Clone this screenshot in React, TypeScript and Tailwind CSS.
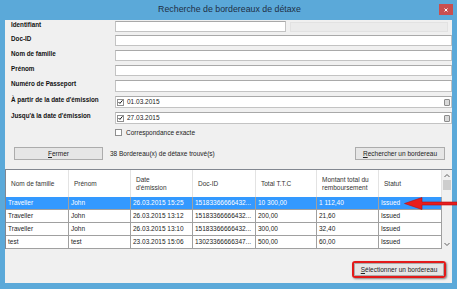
import React from 'react'

const cols = ['w-[63px]', 'w-[62px]', 'w-[62px]', 'w-[63px]', 'w-[61px]', 'w-[62px]', 'w-[63px]']

const rows = [
  ['Traveller', 'John', '26.03.2015 15:25', '15183366666432...', '10 300,00', '1 112,40', 'Issued'],
  ['Traveller', 'John', '26.03.2015 13:12', '15183366666432...', '200,00', '21,60', 'Issued'],
  ['Traveller', 'John', '26.03.2015 13:10', '15183366666432...', '300,00', '32,40', 'Issued'],
  ['test', 'test', '23.03.2015 15:06', '13023366666347...', '500,00', '60,00', 'Issued'],
]

function TextInput({ children }: { children?: React.ReactNode }) {
  return (
    <div className="flex-1 h-full bg-white border border-[#c3c3c3] border-t-[#a9a9a9] flex items-center">
      {children}
    </div>
  )
}

function Check({ checked }: { checked?: boolean }) {
  return (
    <div className="w-[7px] h-[7px] bg-white border border-[#8f8f8f] flex items-center justify-center">
      {checked && (
        <svg width="6" height="6" viewBox="0 0 6 6">
          <path d="M0.6 3 L2.3 4.7 L5.4 1" stroke="#1a1a1a" strokeWidth="1.2" fill="none" />
        </svg>
      )}
    </div>
  )
}

function DateInput({ value }: { value: string }) {
  return (
    <TextInput>
      <div className="ml-[1px]">
        <Check checked />
      </div>
      <span className="ml-[3px] text-[6.5px] text-[#222]">{value}</span>
      <div className="ml-auto mr-[1px] w-[6px] h-[7px] bg-[#d9d9d9] border border-[#8c8c8c] rounded-[1px]" />
    </TextInput>
  )
}

function Btn({ u, rest, className }: { u: string; rest: string; className: string }) {
  return (
    <div className={`h-[13px] bg-[#e6e6e6] border border-[#acacac] flex items-center justify-center text-[6.5px] text-[#222] ${className}`}>
      <span className="underline">{u}</span>
      <span>{rest}</span>
    </div>
  )
}

export default function App() {
  const label = 'w-[110px] pl-[6px] text-[6.3px] font-bold text-[#111] leading-[8px]'
  return (
    <div className="relative w-[457px] h-[289px] bg-[#5ba9d9] flex flex-col font-['Liberation_Sans',Arial,sans-serif] overflow-hidden">
      {/* title bar */}
      <div className="h-[20px] relative flex items-center justify-center">
        <span className="text-[8.8px] text-[#1e2f45] pl-[2px]">Recherche de bordereaux de détaxe</span>
        <div className="absolute right-[4px] top-[4px] w-[14px] h-[11px] bg-[#c94f4f] flex items-center justify-center">
          <svg width="4" height="4" viewBox="0 0 4 4">
            <path d="M0.5 0.5 L3.5 3.5 M3.5 0.5 L0.5 3.5" stroke="#fff" strokeWidth="1" />
          </svg>
        </div>
      </div>

      {/* body */}
      <div className="mx-[5px] h-[263px] bg-[#f0f0f0] flex flex-col">
        <div className="flex flex-col pt-[1px]">
          <div className="flex h-[14px]">
            <div className={label}>Identifiant</div>
            <div className="flex flex-1 h-[11px] gap-[4px]">
              <div className="w-[171px] h-full bg-white border border-[#c3c3c3] border-t-[#a9a9a9]" />
              <div className="w-[158px] h-[10px] mt-[1px] bg-[#ebebeb] border border-[#e2e2e2]" />
            </div>
          </div>
          <div className="flex h-[15px]">
            <div className={label}>Doc-ID</div>
            <div className="flex flex-1 h-[11px]"><TextInput /></div>
          </div>
          <div className="flex h-[15px]">
            <div className={label}>Nom de famille</div>
            <div className="flex flex-1 h-[11px]"><TextInput /></div>
          </div>
          <div className="flex h-[15px]">
            <div className={label}>Prénom</div>
            <div className="flex flex-1 h-[11px]"><TextInput /></div>
          </div>
          <div className="flex h-[16px]">
            <div className={label}>Numéro de Passeport</div>
            <div className="flex flex-1 h-[12px]"><TextInput /></div>
          </div>
          <div className="flex h-[16px]">
            <div className={label}>À partir de la date d'émission</div>
            <div className="flex flex-1 h-[12px]"><DateInput value="01.03.2015" /></div>
          </div>
          <div className="flex h-[17px]">
            <div className={label}>Jusqu'à la date d'émission</div>
            <div className="flex flex-1 h-[12px]"><DateInput value="27.03.2015" /></div>
          </div>
          <div className="flex h-[18px]">
            <div className="w-[110px]" />
            <div className="flex items-start gap-[4px]">
              <Check />
              <span className="text-[6.5px] text-[#222] leading-[8px]">Correspondance exacte</span>
            </div>
          </div>
          <div className="flex items-center h-[13px]">
            <Btn u="F" rest="ermer" className="ml-[9px] w-[89px]" />
            <span className="ml-[7px] text-[6.5px] text-[#222]">38 Bordereau(x) de détaxe trouvé(s)</span>
            <Btn u="R" rest="echercher un bordereau" className="ml-auto mr-[7px] w-[90px]" />
          </div>
        </div>

        {/* table */}
        <div className="mt-[9px] h-[80px] flex border-t border-l border-[#828790] bg-white overflow-hidden">
          <div className="flex flex-col">
            <div className="flex h-[27px]">
              {['Nom de famille', 'Prénom', 'Date\nd\'émission', 'Doc-ID', 'Total T.T.C', 'Montant total du\nremboursement', 'Statut'].map((h, i) => (
                <div key={i} className={`${cols[i]} h-full border-r border-[#e3e3e3] flex items-center pl-[5px] text-[6.5px] text-[#333] leading-[8px] whitespace-pre`}>
                  {h}
                </div>
              ))}
            </div>
            {rows.map((r, ri) => (
              <div key={ri} className={`flex h-[13px] ${ri === 0 ? 'bg-[#3399ff] text-white' : 'text-[#1a1a1a]'}`}>
                {r.map((c, ci) => (
                  <div key={ci} className={`${cols[ci]} h-full border-r border-b border-[#a0a0a0] flex items-center pl-[2px] text-[6.5px] whitespace-nowrap overflow-hidden`}>
                    {c}
                  </div>
                ))}
              </div>
            ))}
          </div>
          {/* scrollbar */}
          <div className="w-[10px] bg-[#f0f0f0] flex flex-col items-center">
            <svg width="8" height="9" viewBox="0 0 8 9" className="mt-[1px]">
              <path d="M1.5 6 L4 3.5 L6.5 6" stroke="#606060" strokeWidth="1" fill="none" />
            </svg>
            <div className="w-[8px] h-[10px] bg-[#cdcdcd]" />
            <div className="flex-1" />
            <svg width="8" height="9" viewBox="0 0 8 9">
              <path d="M1.5 3 L4 5.5 L6.5 3" stroke="#606060" strokeWidth="1" fill="none" />
            </svg>
          </div>
        </div>

        {/* footer */}
        <div className="flex justify-end pr-[6px] pt-[12px]">
          <div className="rounded-[3px] border-2 border-[#e31b1b] shadow-[1px_1px_2px_rgba(0,0,0,0.45)]">
            <Btn u="S" rest="électionner un bordereau" className="w-[90px]" />
          </div>
        </div>
      </div>

      {/* red arrow */}
      <svg className="absolute left-[403px] top-[196px]" width="54" height="15" viewBox="0 0 54 15">
        <path d="M1.5 7.5 L19 1.5 L19 6 L54 6 L54 9 L19 9 L19 13.5 Z" fill="#e81d1d" stroke="#b50f0f" strokeWidth="0.6" />
      </svg>
    </div>
  )
}
